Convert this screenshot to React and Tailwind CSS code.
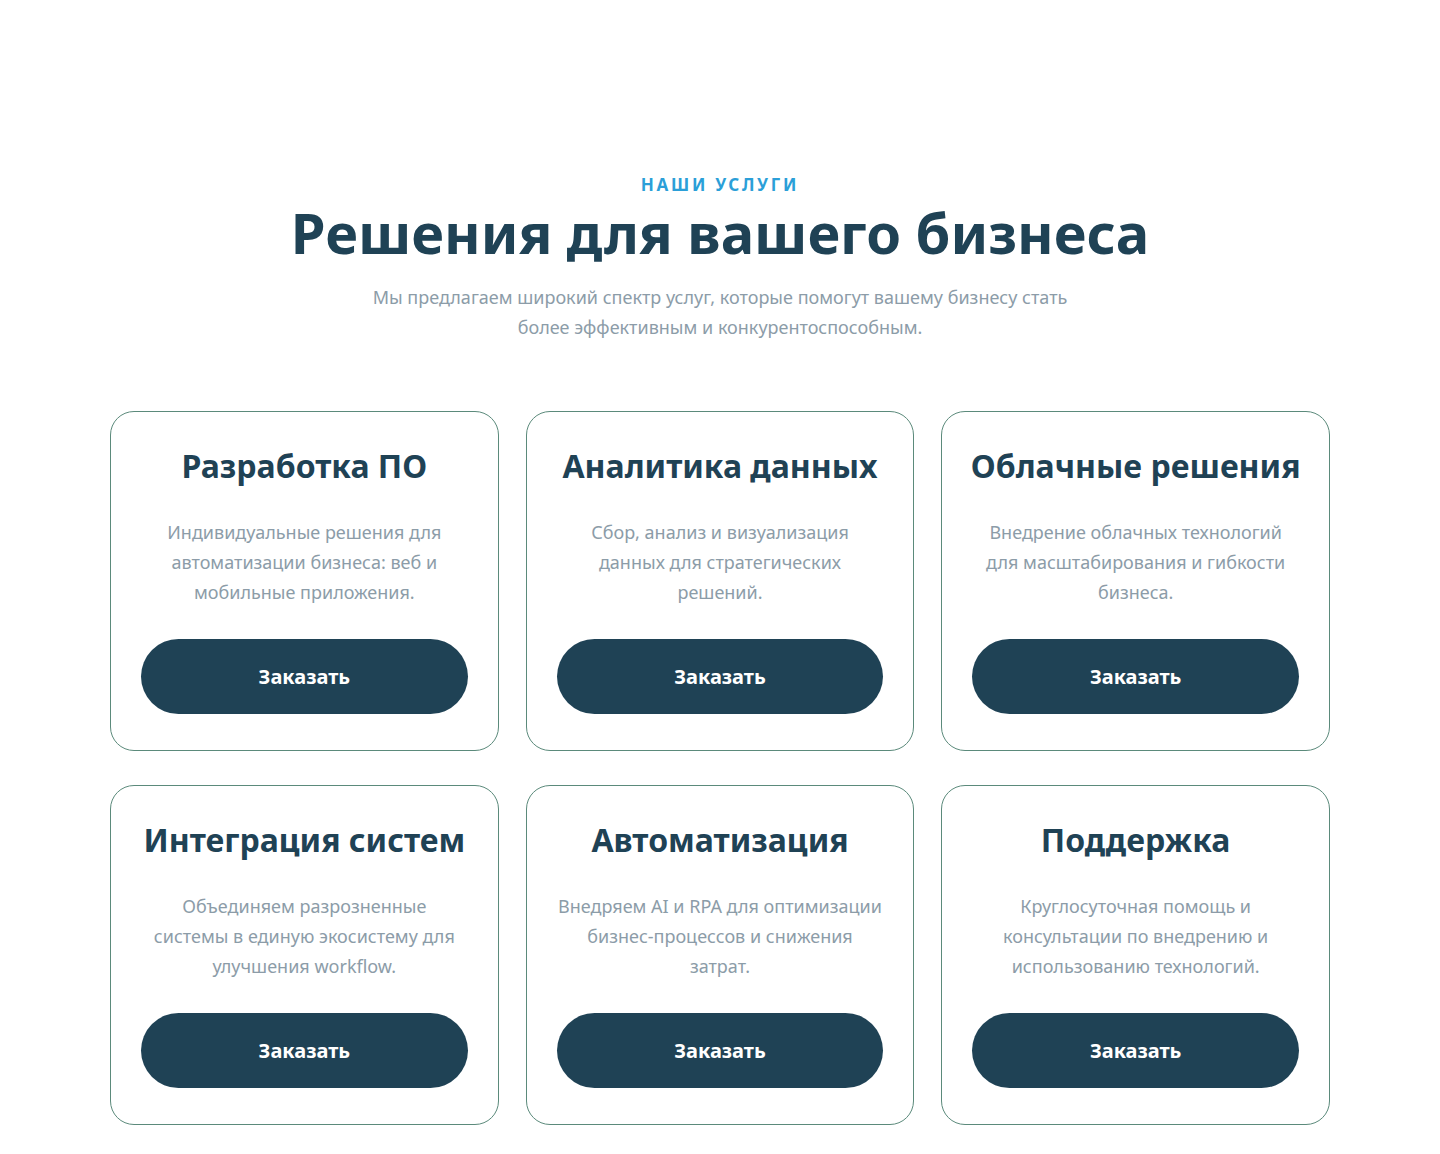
const services = [
  {
    title: 'Разработка ПО',
    text: 'Индивидуальные решения для автоматизации бизнеса: веб и мобильные приложения.',
  },
  {
    title: 'Аналитика данных',
    text: 'Сбор, анализ и визуализация данных для стратегических решений.',
  },
  {
    title: 'Облачные решения',
    text: 'Внедрение облачных технологий для масштабирования и гибкости бизнеса.',
  },
  {
    title: 'Интеграция систем',
    text: 'Объединяем разрозненные\nсистемы в единую экосистему для улучшения workflow.',
  },
  {
    title: 'Автоматизация',
    text: 'Внедряем AI и RPA для оптимизации бизнес-процессов и снижения затрат.',
  },
  {
    title: 'Поддержка',
    text: 'Круглосуточная помощь и консультации по внедрению и использованию технологий.',
  },
]

function ServiceCard({ title, text }) {
  return (
    <div className="flex h-[340px] flex-col items-center rounded-[24px] border border-[#5b8a7b] bg-white px-[30px] pt-[34px] pb-[36px] text-center">
      <h3 className="whitespace-nowrap text-[32px] font-bold leading-[40px] text-[#1f4255]">{title}</h3>
      <p className="mt-[31px] whitespace-pre-line text-[18px] leading-[30px] text-[#8c9ca8]">{text}</p>
      <button className="mt-auto h-[75px] w-full rounded-full bg-[#1f4255] text-[20px] font-bold text-white">
        Заказать
      </button>
    </div>
  )
}

export default function App() {
  return (
    <div className="min-h-[1154px] bg-white pt-[174px] pb-[28px]" style={{ fontFamily: '"Noto Sans", "Open Sans", sans-serif' }}>
      <div className="mx-auto w-[1220px]">
        <div className="flex flex-col items-center text-center">
          <span className="text-[17px] font-bold leading-[22px] tracking-[0.16em] text-[#2b9fd8]">НАШИ УСЛУГИ</span>
          <h2 className="mt-[3px] text-[56px] font-bold leading-[66px] text-[#1f4255]">Решения для вашего бизнеса</h2>
          <p className="mt-[17px] max-w-[730px] text-[18px] leading-[30px] text-[#8c9ca8]">
            Мы предлагаем широкий спектр услуг, которые помогут вашему бизнесу стать более эффективным и конкурентоспособным.
          </p>
        </div>
        <div className="mt-[69px] grid grid-cols-3 gap-x-[27px] gap-y-[34px]">
          {services.map((s) => (
            <ServiceCard key={s.title} {...s} />
          ))}
        </div>
      </div>
    </div>
  )
}
